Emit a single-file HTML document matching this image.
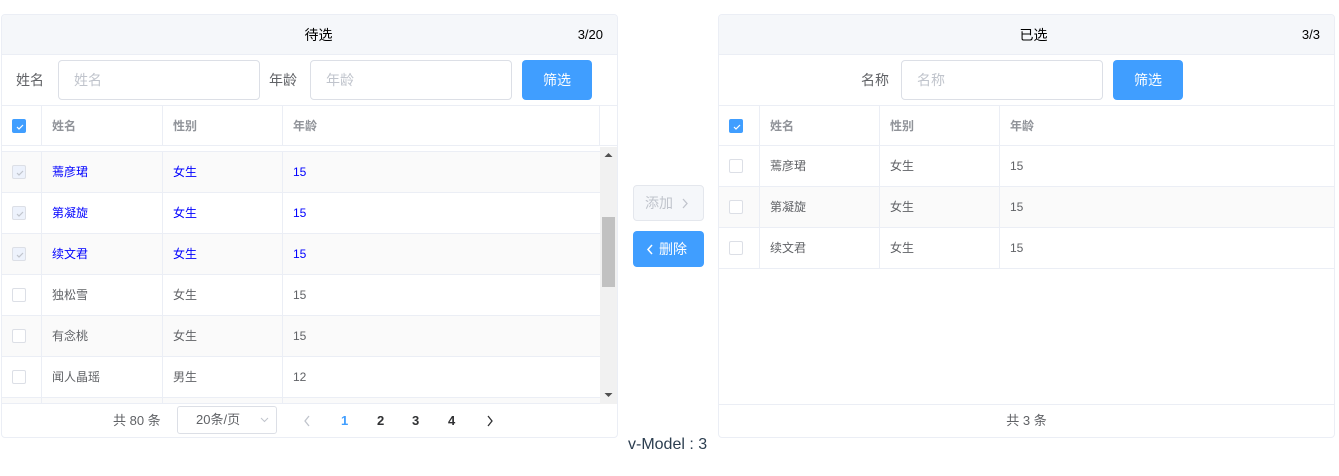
<!DOCTYPE html>
<html><head><meta charset="utf-8"><style>
*{box-sizing:border-box;margin:0;padding:0}
body{width:1339px;height:476px;background:#fff;font-family:"Liberation Sans","Noto Sans CJK SC",sans-serif;font-size:13px;color:#606266;position:relative;overflow:hidden}
.a{position:absolute}
.panel{position:absolute;top:14px;height:424px;border:1px solid #ebeef5;border-radius:4px;overflow:hidden;background:#fff}
.hd{position:absolute;left:0;right:0;top:0;height:40px;background:#f5f7fa;border-bottom:1px solid #ebeef5;color:#000;font-size:14px;line-height:40px;text-align:center}
.cnt{position:absolute;right:14px;top:0;font-size:13px;color:#000}
.inp{position:absolute;height:40px;border:1px solid #dcdfe6;border-radius:4px;color:#c0c4cc;font-size:14px;line-height:38px;padding-left:15px}
.btn{position:absolute;height:40px;background:#409eff;border-radius:4px;color:#fff;font-size:14px;line-height:40px;text-align:center}
.lbl{position:absolute;font-size:14px;line-height:40px;color:#606266}
.row{position:absolute;left:0;height:41px;border-bottom:1px solid #ebeef5;font-size:12px;line-height:40px}
.row span{position:absolute;top:0;height:40px;border-left:1px solid #ebeef5;padding-left:10px}
.cb{position:absolute;left:10px;top:13px;width:14px;height:14px;border:1px solid #dcdfe6;border-radius:2px;background:#fff}
.cb.on{background:#409eff;border-color:#409eff}
.cb.dis{background:#edf2fc;border-color:#dcdfe6}
.cb svg{position:absolute;left:2px;top:2px}
.th{color:#909399;font-weight:bold}
.sel{color:#00f}
</style></head><body>

<div class="panel" style="left:1px;width:617px">
  <div class="hd" style="padding-left:18px">待选<span class="cnt">3/20</span></div>
  <div class="lbl" style="left:14px;top:45px">姓名</div>
  <div class="inp" style="left:56px;top:45px;width:202px">姓名</div>
  <div class="lbl" style="left:267px;top:45px">年龄</div>
  <div class="inp" style="left:308px;top:45px;width:202px">年龄</div>
  <div class="btn" style="left:520px;top:45px;width:70px">筛选</div>

  <div class="row th" style="top:90px;width:615px;border-top:1px solid #ebeef5"><div class="cb on"><svg width="10" height="10"><path d="M2 5l2 2 4-4" stroke="#fff" stroke-width="1.2" fill="none"/></svg></div><span style="left:39px;width:121px">姓名</span><span style="left:160px;width:120px">性别</span><span style="left:280px;width:317px">年龄</span><span style="left:597px;width:18px;padding:0"></span></div>
  <div class="a" style="top:131px;left:0;width:598px;height:6px;border-bottom:1px solid #ebeef5"></div>

  <div class="row sel" style="top:137px;width:598px;background:#fafafa"><div class="cb dis"><svg width="10" height="10"><path d="M2 5l2 2 4-4" stroke="#c0c4cc" stroke-width="1.2" fill="none"/></svg></div><span style="left:39px;width:121px">蔫彦珺</span><span style="left:160px;width:120px">女生</span><span style="left:280px;width:318px">15</span></div>
  <div class="row sel" style="top:178px;width:598px"><div class="cb dis"><svg width="10" height="10"><path d="M2 5l2 2 4-4" stroke="#c0c4cc" stroke-width="1.2" fill="none"/></svg></div><span style="left:39px;width:121px">第凝旋</span><span style="left:160px;width:120px">女生</span><span style="left:280px;width:318px">15</span></div>
  <div class="row sel" style="top:219px;width:598px;background:#fafafa"><div class="cb dis"><svg width="10" height="10"><path d="M2 5l2 2 4-4" stroke="#c0c4cc" stroke-width="1.2" fill="none"/></svg></div><span style="left:39px;width:121px">续文君</span><span style="left:160px;width:120px">女生</span><span style="left:280px;width:318px">15</span></div>
  <div class="row" style="top:260px;width:598px"><div class="cb"></div><span style="left:39px;width:121px">独松雪</span><span style="left:160px;width:120px">女生</span><span style="left:280px;width:318px">15</span></div>
  <div class="row" style="top:301px;width:598px;background:#fafafa"><div class="cb"></div><span style="left:39px;width:121px">有念桃</span><span style="left:160px;width:120px">女生</span><span style="left:280px;width:318px">15</span></div>
  <div class="row" style="top:342px;width:598px"><div class="cb"></div><span style="left:39px;width:121px">闻人晶瑶</span><span style="left:160px;width:120px">男生</span><span style="left:280px;width:318px">12</span></div>
  <div class="row" style="top:383px;width:598px;height:6px;background:#fafafa;border-bottom:1px solid #ebeef5"><span style="left:39px;width:121px;height:6px"></span><span style="left:160px;width:120px;height:6px"></span><span style="left:280px;width:318px;height:6px"></span></div>

  <div class="a" style="left:598px;top:132px;width:17px;height:257px;background:#f1f1f1">
    <svg class="a" style="left:4px;top:5px" width="9" height="6"><path d="M0.5 5L4.5 1L8.5 5Z" fill="#505050"/></svg>
    <div class="a" style="left:2px;top:70px;width:13px;height:70px;background:#c1c1c1"></div>
    <svg class="a" style="left:4px;top:245px" width="9" height="6"><path d="M0.5 1L4.5 5L8.5 1Z" fill="#505050"/></svg>
  </div>

  <div class="a" style="left:111px;top:390px;line-height:32px;font-size:13px">共 80 条</div>
  <div class="a" style="left:175px;top:391px;width:100px;height:28px;border:1px solid #dcdfe6;border-radius:3px;line-height:26px;padding-left:18px;font-size:13px">20条/页<svg class="a" style="left:82px;top:10px" width="9" height="6"><path d="M1 1l3.5 3.5L8 1" stroke="#c0c4cc" fill="none"/></svg></div>
  <svg class="a" style="left:301px;top:400px" width="8" height="12"><path d="M6 1L2 6l4 5" stroke="#c0c4cc" stroke-width="1.3" fill="none"/></svg>
  <div class="a" style="left:339px;top:390px;line-height:32px;font-weight:bold;color:#409eff">1</div>
  <div class="a" style="left:375px;top:390px;line-height:32px;font-weight:bold;color:#303133">2</div>
  <div class="a" style="left:410px;top:390px;line-height:32px;font-weight:bold;color:#303133">3</div>
  <div class="a" style="left:446px;top:390px;line-height:32px;font-weight:bold;color:#303133">4</div>
  <svg class="a" style="left:484px;top:400px" width="8" height="12"><path d="M2 1l4 5-4 5" stroke="#303133" stroke-width="1.3" fill="none"/></svg>
</div>

<div class="a" style="left:633px;top:185px;width:71px;height:36px;border:1px solid #e4e7ed;border-radius:4px;background:#f5f7fa;color:#c0c4cc;font-size:14px;line-height:34px;padding-left:11px">添加<svg class="a" style="left:48px;top:12px" width="7" height="11"><path d="M1 1l4 4.5L1 10" stroke="#c0c4cc" stroke-width="1.3" fill="none"/></svg></div>
<div class="a" style="left:633px;top:231px;width:71px;height:36px;border-radius:4px;background:#409eff;color:#fff;font-size:14px;line-height:36px;padding-left:26px"><svg class="a" style="left:13px;top:13px" width="7" height="11"><path d="M6 1L2 5.5 6 10" stroke="#fff" stroke-width="1.5" fill="none"/></svg>删除</div>
<div class="a" style="left:628px;top:436px;font-size:16px;line-height20px;color:#2c3e50">v-Model : 3</div>

<div class="panel" style="left:718px;width:617px">
  <div class="hd" style="padding-left:14px">已选<span class="cnt">3/3</span></div>
  <div class="lbl" style="left:142px;top:45px">名称</div>
  <div class="inp" style="left:182px;top:45px;width:202px">名称</div>
  <div class="btn" style="left:394px;top:45px;width:70px">筛选</div>

  <div class="row th" style="top:90px;width:615px;border-top:1px solid #ebeef5"><div class="cb on"><svg width="10" height="10"><path d="M2 5l2 2 4-4" stroke="#fff" stroke-width="1.2" fill="none"/></svg></div><span style="left:40px;width:120px">姓名</span><span style="left:160px;width:120px">性别</span><span style="left:280px;width:335px">年龄</span></div>
  <div class="row" style="top:131px;width:615px"><div class="cb"></div><span style="left:40px;width:120px">蔫彦珺</span><span style="left:160px;width:120px">女生</span><span style="left:280px;width:335px">15</span></div>
  <div class="row" style="top:172px;width:615px;background:#fafafa"><div class="cb"></div><span style="left:40px;width:120px">第凝旋</span><span style="left:160px;width:120px">女生</span><span style="left:280px;width:335px">15</span></div>
  <div class="row" style="top:213px;width:615px"><div class="cb"></div><span style="left:40px;width:120px">续文君</span><span style="left:160px;width:120px">女生</span><span style="left:280px;width:335px">15</span></div>

  <div class="a" style="left:0;top:389px;width:615px;height:34px;border-top:1px solid #ebeef5;text-align:center;line-height:32px;font-size:13px">共 3 条</div>
</div>
</body></html>
